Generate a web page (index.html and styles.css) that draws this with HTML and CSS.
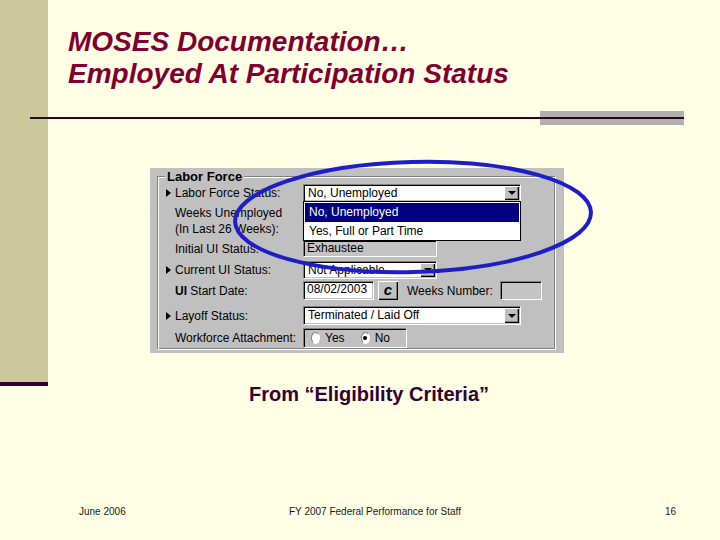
FILE: index.html
```html
<!DOCTYPE html>
<html>
<head>
<meta charset="utf-8">
<link rel="stylesheet" href="styles.css">
</head>
<body>
<div class="slide">
  <div class="sidebar">
    <div class="sidebar-fill"></div>
    <div class="sidebar-foot"></div>
  </div>
  <div class="main">
    <h1 class="title">MOSES Documentation…<br>Employed At Participation Status</h1>
    <div class="rule"><div class="rule-bar"></div></div>
    <div class="shot">
      <div class="group">
        <div class="legend">Labor Force</div>
        <div class="row r1">
          <div class="lbl"><i class="tri"></i><span>Labor Force Status:</span></div>
          <div class="combo w-wide"><span class="val">No, Unemployed</span><span class="arrow"></span></div>
        </div>
        <div class="row r2">
          <div class="lbl plain two">Weeks Unemployed<br>(In Last 26 Weeks):</div>
        </div>
        <div class="row r3">
          <div class="lbl plain"><span>Initial UI Status:</span></div>
          <div class="field ro w-mid">Exhaustee</div>
        </div>
        <div class="row r4">
          <div class="lbl"><i class="tri"></i><span>Current UI Status:</span></div>
          <div class="combo w-mid"><span class="val">Not Applicable</span><span class="arrow"></span></div>
        </div>
        <div class="row r5">
          <div class="lbl plain"><span><b>UI</b> Start Date:</span></div>
          <div class="inline">
            <div class="field w-date">08/02/2003</div>
            <div class="btn">c</div>
            <span class="sublbl">Weeks Number:</span>
            <div class="field ro w-num"></div>
          </div>
        </div>
        <div class="row r6">
          <div class="lbl"><i class="tri"></i><span>Layoff Status:</span></div>
          <div class="combo w-wide"><span class="val">Terminated / Laid Off</span><span class="arrow"></span></div>
        </div>
        <div class="row r7">
          <div class="lbl plain"><span>Workforce Attachment:</span></div>
          <div class="radios">
            <span class="radio"></span><span class="rtext">Yes</span>
            <span class="radio on"></span><span class="rtext">No</span>
          </div>
        </div>
      </div>
      <div class="list">
        <div class="opt sel">No, Unemployed</div>
        <div class="opt">Yes, Full or Part Time</div>
      </div>
    </div>
    <p class="caption">From “Eligibility Criteria”</p>
    <footer class="footer">
      <span>June 2006</span>
      <span>FY 2007 Federal Performance for Staff</span>
      <span class="pnum">16</span>
    </footer>
  </div>
  <svg class="mark" width="720" height="540" viewBox="0 0 720 540">
    <ellipse cx="413" cy="217" rx="178" ry="55" transform="rotate(-1.5 413 217)" fill="none" stroke="#1E1EC8" stroke-width="4"/>
  </svg>
</div>
</body>
</html>
```
FILE: styles.css
```css
html, body {
  margin: 0;
  padding: 0;
}
.slide {
  width: 720px;
  height: 540px;
  background: #FFFFE5;
  display: flex;
  position: relative;
  overflow: hidden;
  font-family: "Liberation Sans", Arial, sans-serif;
}
.sidebar {
  width: 48px;
  flex: none;
  display: flex;
  flex-direction: column;
}
.sidebar-fill {
  height: 382px;
  background: #CBC89B;
}
.sidebar-foot {
  height: 4px;
  background: #330033;
}
.main {
  flex: 1;
  display: flex;
  flex-direction: column;
}
.title {
  margin: 26px 0 0 20px;
  font: italic bold 28px/32px "Liberation Sans", Arial, sans-serif;
  color: #7F0030;
}
.rule {
  margin: 21px 36px 0 -18px;
  height: 14px;
  display: flex;
  justify-content: flex-end;
  background: linear-gradient(#330033, #330033) 0 6px / 100% 2px no-repeat;
}
.rule-bar {
  width: 144px;
  background: linear-gradient(#330033, #330033) 0 6px / 100% 2px no-repeat, #B2B0AA;
}
.shot {
  margin: 43px 0 0 102px;
  width: 414px;
  height: 185px;
  box-sizing: border-box;
  background: #C0C0C0;
  position: relative;
  padding: 8px 0 0 7px;
  font-size: 12px;
  color: #000;
}
.group {
  width: 399px;
  height: 174px;
  box-sizing: border-box;
  border: 1px solid;
  border-color: #808080 #FFFFFF #FFFFFF #808080;
  box-shadow: inset 1px 1px #FFFFFF, inset -1px -1px #808080;
  padding: 1px 0 0 8px;
}
.legend {
  margin: -8px 0 0 -1px;
  height: 14px;
  width: fit-content;
  padding: 0 2px;
  background: #C0C0C0;
  font-weight: bold;
  font-size: 13px;
  line-height: 14px;
}
.row {
  display: grid;
  grid-template-columns: 137px auto;
  align-items: center;
}
.r1 { height: 18px; }
.r2 { height: 38px; align-items: start; }
.r3 { height: 17px; }
.r4 { height: 18px; margin-top: 4px; }
.r5 { height: 19px; margin-top: 2px; }
.r6 { height: 19px; margin-top: 6px; }
.r7 { height: 20px; margin-top: 3px; }
.lbl {
  display: flex;
  align-items: center;
  white-space: nowrap;
  line-height: 14px;
}
.lbl.plain { padding-left: 9px; }
.lbl.two {
  display: block;
  line-height: 16px;
  padding-top: 3px;
}
.tri {
  width: 0;
  height: 0;
  border-left: 5px solid #000;
  border-top: 4px solid transparent;
  border-bottom: 4px solid transparent;
  margin-right: 4px;
}
.field, .combo {
  height: 100%;
  box-sizing: border-box;
  border: 1px solid;
  border-color: #808080 #FFFFFF #FFFFFF #808080;
  box-shadow: inset 1px 1px #000, inset -1px -1px #C0C0C0;
  background: #FFFFFF;
  padding-left: 3px;
  line-height: 15px;
  white-space: nowrap;
  overflow: hidden;
}
.field.ro { background: #C4C4C4; }
.combo {
  display: flex;
  align-items: center;
  padding: 1px;
  padding-left: 4px;
}
.combo .val { flex: 1; }
.arrow {
  width: 15px;
  height: 100%;
  background: #C0C0C0;
  box-shadow: inset 1px 1px #FFFFFF, inset -1px -1px #000, inset -2px -2px #808080;
  display: flex;
  align-items: center;
  justify-content: center;
}
.arrow::after {
  content: "";
  border-top: 4px solid #000;
  border-left: 4px solid transparent;
  border-right: 4px solid transparent;
}
.w-wide { width: 218px; }
.w-mid { width: 134px; }
.inline {
  display: flex;
  align-items: center;
  height: 100%;
}
.w-date { width: 71px; }
.btn {
  margin-left: 4px;
  width: 20px;
  height: 19px;
  box-sizing: border-box;
  background: #C0C0C0;
  box-shadow: inset 1px 1px #FFFFFF, inset -1px -1px #000, inset -2px -2px #808080;
  font: italic bold 15px/18px "Liberation Sans", Arial, sans-serif;
  text-align: center;
}
.sublbl { margin-left: 9px; }
.w-num { width: 42px; margin-left: 7px; }
.radios {
  width: 104px;
  height: 100%;
  box-sizing: border-box;
  border: 1px solid;
  border-color: #808080 #FFFFFF #FFFFFF #808080;
  box-shadow: inset 1px 1px #000, inset -1px -1px #C0C0C0;
  display: flex;
  align-items: center;
  padding-left: 7px;
}
.radio {
  width: 12px;
  height: 12px;
  box-sizing: border-box;
  border-radius: 50%;
  border: 1px solid;
  border-color: #808080 #FFFFFF #FFFFFF #808080;
  background: #FFFFFF;
  display: flex;
  align-items: center;
  justify-content: center;
}
.radio.on::after {
  content: "";
  width: 4px;
  height: 4px;
  border-radius: 50%;
  background: #000;
}
.rtext { margin-left: 5px; margin-right: 16px; }
.list {
  position: absolute;
  left: 153px;
  top: 33px;
  width: 218px;
  height: 40px;
  box-sizing: border-box;
  border: 1px solid #000;
  background: #FFFFFF;
  padding: 1px 1px 0;
}
.opt {
  height: 19px;
  line-height: 19px;
  padding-left: 4px;
}
.opt.sel {
  background: #000080;
  color: #FFFFFF;
}
.caption {
  margin: 29px 0 0 0;
  width: 642px;
  text-align: center;
  font: bold 20px/24px "Liberation Sans", Arial, sans-serif;
  color: #330033;
}
.footer {
  margin-top: auto;
  padding: 0 0 22px 31px;
  display: grid;
  grid-template-columns: 210px auto 1fr;
  font-size: 10px;
  line-height: 12px;
  color: #1a1a1a;
}
.pnum {
  text-align: right;
  padding-right: 44px;
}
.mark {
  position: absolute;
  left: 0;
  top: 0;
  pointer-events: none;
}
```
